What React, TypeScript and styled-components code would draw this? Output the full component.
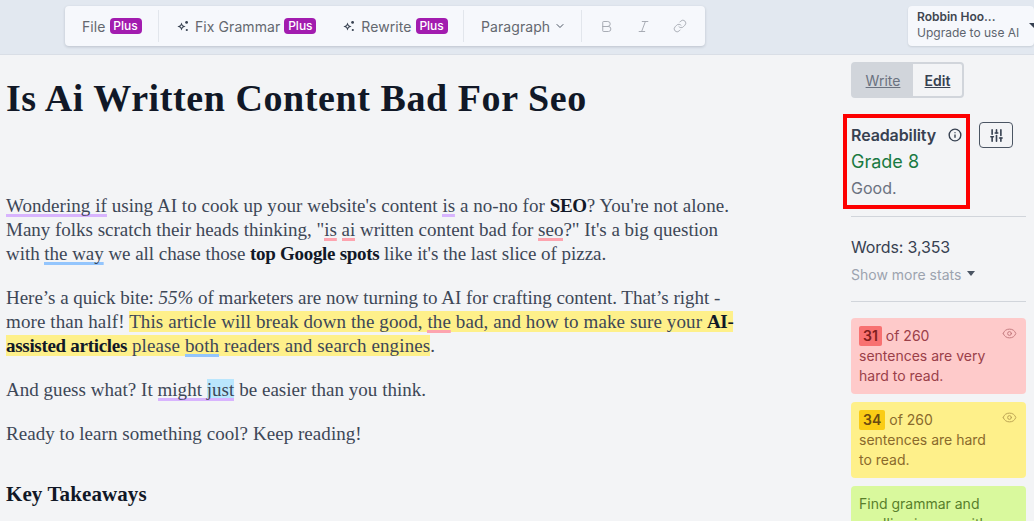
import { ChevronDown, Bold, Italic, Link, Info, SlidersVertical, Eye } from "lucide-react";
import { styled, createGlobalStyle } from "styled-components";

const GlobalStyle = createGlobalStyle`
    html, body {
        margin: 0;
        height: 100%;
        overflow: hidden;
        background-color: #f3f4f6;
    }
    #root {
        height: 100%;
    }
`;

const Page = styled.div`
    position: relative;
    width: 1034px;
    height: 521px;
    overflow: hidden;
    font-family: Inter, "Liberation Sans", sans-serif;
    background-color: #f3f4f6;
`;

const Header = styled.header`
    display: flex;
    justify-content: space-between;
    height: 55px;
    padding: 6px 0 0 65px;
    box-sizing: border-box;
    background-color: #e2e8f0;
    border-bottom: 1px solid #d9dee6;
`;

const Toolbar = styled.div`
    display: flex;
    align-items: center;
    width: 640px;
    height: 40px;
    padding: 4px 0;
    box-sizing: border-box;
    background-color: #f6f8fc;
    border-radius: 4px;
    box-shadow: 0 1px 3px rgba(15, 23, 42, 0.18);
`;

const ToolGroup = styled.div<{ $width: number; $pad?: number; $last?: boolean }>`
    display: flex;
    align-items: center;
    gap: 27px;
    width: ${(p) => p.$width}px;
    height: 32px;
    padding-left: ${(p) => p.$pad ?? 17}px;
    box-sizing: border-box;
    border-right: ${(p) => (p.$last ? "none" : "1px solid #e2e6ec")};
`;

const ToolButton = styled.div`
    display: flex;
    align-items: center;
    gap: 4px;
    font-size: 14px;
    letter-spacing: 0.08px;
    color: #64686f;
    white-space: nowrap;
`;

const SparkleIcon = styled.svg`
    margin-right: 2px;
    color: #374151;
`;

const PlusBadge = styled.span`
    display: inline-block;
    width: 32px;
    height: 16px;
    font-size: 12px;
    font-weight: 500;
    line-height: 16px;
    letter-spacing: 0;
    text-align: center;
    color: #fff;
    background-color: #a21caf;
    border-radius: 4px;
`;

const ParagraphCaret = styled(ChevronDown)`
    color: #4b5563;
`;

const FormatIcons = styled.div`
    display: flex;
    align-items: center;
    gap: 22px;
    color: #a3a8b0;
`;

const UserCard = styled.div`
    position: relative;
    width: 126px;
    height: 40px;
    padding: 3px 0 0 9px;
    box-sizing: border-box;
    background-color: #f6f8fc;
    border-radius: 4px;
    box-shadow: 0 1px 2px rgba(15, 23, 42, 0.12);
`;

const UserName = styled.div`
    font-size: 12px;
    font-weight: 600;
    line-height: 16px;
    color: #3f4650;
`;

const UserPlan = styled.div`
    font-size: 12px;
    line-height: 16px;
    color: #5d646e;
`;

const Caret = styled.span`
    position: absolute;
    top: 17px;
    left: 121px;
    border-left: 5px solid transparent;
    border-right: 5px solid transparent;
    border-top: 5px solid #374151;
`;

const Body = styled.div`
    display: flex;
`;

const Article = styled.main`
    width: 851px;
    padding: 21px 0 0 6px;
    box-sizing: border-box;
    font-family: "Liberation Serif", serif;
    color: #3d4757;
`;

const Title = styled.h1`
    margin: 0 0 73px;
    height: 45px;
    font-size: 38px;
    font-weight: 700;
    line-height: 45px;
    letter-spacing: 0.58px;
    color: #111827;
    white-space: nowrap;
`;

const Para = styled.div`
    margin: 0 0 20px;
    font-size: 19px;
    line-height: 24px;
    white-space: nowrap;
`;

// the reference uses a wider serif, so each line gets its own tracking to end at the same x
const Line = styled.div<{ $track?: number }>`
    letter-spacing: ${(p) => p.$track ?? 0.03}px;
`;

const Strong = styled.strong`
    letter-spacing: -0.3px;
    color: #111827;
`;

const Hl = styled.span`
    background-color: #fef08a;
`;

const flagColors = { purple: "#d8b4fe", red: "#fda4af", blue: "#93c5fd" };

const Flag = styled.span<{ $tone: "purple" | "red" | "blue"; $selected?: boolean }>`
    padding-bottom: 1px;
    background: linear-gradient(${(p) => flagColors[p.$tone]}, ${(p) => flagColors[p.$tone]}) bottom / 100% 3px no-repeat;
    background-color: ${(p) => (p.$selected ? "#bae6fd" : "transparent")};
`;

const SubHeading = styled.h2`
    margin: 34px 0 0;
    font-size: 21px;
    font-weight: 700;
    line-height: 28px;
    letter-spacing: 0.1px;
    color: #111827;
    white-space: nowrap;
`;

const Sidebar = styled.aside`
    display: flex;
    flex-direction: column;
    width: 175px;
    padding-top: 7px;
`;

const ModeSwitch = styled.div`
    display: flex;
    width: 113px;
    height: 36px;
    padding: 2px;
    box-sizing: border-box;
    background-color: #d1d5db;
    border-radius: 4px;
`;

const ModeItem = styled.div<{ $active?: boolean }>`
    display: flex;
    align-items: center;
    justify-content: center;
    width: ${(p) => (p.$active ? 49 : 60)}px;
    font-size: 14px;
    font-weight: ${(p) => (p.$active ? 600 : 400)};
    color: ${(p) => (p.$active ? "#374151" : "#6b7280")};
    text-decoration: underline;
    background-color: ${(p) => (p.$active ? "#f3f4f6" : "transparent")};
    border-radius: 0 2px 2px 0;
`;

const ReadRow = styled.div`
    display: flex;
    align-items: flex-start;
    margin-top: 24px;
`;

const ReadInfo = styled.div`
    width: 128px;
`;

const ReadTitle = styled.div`
    display: flex;
    align-items: center;
    justify-content: space-between;
    width: 111px;
    font-size: 16px;
    font-weight: 600;
    line-height: 26px;
    letter-spacing: -0.1px;
    color: #374151;
`;

const Grade = styled.div`
    padding-top: 1px;
    font-size: 18px;
    line-height: 26px;
    color: #1a7a42;
`;

const Verdict = styled.div`
    font-size: 16px;
    line-height: 27px;
    color: #6b7280;
`;

const SettingsButton = styled.div`
    display: flex;
    align-items: center;
    justify-content: center;
    width: 34px;
    height: 26px;
    box-sizing: border-box;
    color: #374151;
    border: 1px solid #4b5563;
    border-radius: 4px;
`;

const ReadDivider = styled.div`
    height: 1px;
    margin-top: 14px;
    background-color: #d1d5db;
`;

const Words = styled.div`
    margin-top: 18px;
    font-size: 16px;
    line-height: 24px;
    letter-spacing: -0.15px;
    color: #374151;
`;

const MoreStats = styled.div`
    display: flex;
    align-items: center;
    gap: 6px;
    margin: 6px 0 16px;
    font-size: 14px;
    line-height: 20px;
    color: #9ca3af;
`;

const MoreCaret = styled.span`
    margin-bottom: 3px;
    border-left: 4px solid transparent;
    border-right: 4px solid transparent;
    border-top: 5px solid #4b5563;
`;

const StatsDivider = styled.div`
    height: 1px;
    background-color: #d1d5db;
`;

const Cards = styled.div`
    display: flex;
    flex-direction: column;
    gap: 8px;
    margin-top: 16px;
`;

const Card = styled.div<{ $bg: string; $fg: string }>`
    position: relative;
    height: 76px;
    padding: 8px;
    box-sizing: border-box;
    font-size: 14px;
    line-height: 20px;
    color: ${(p) => p.$fg};
    background-color: ${(p) => p.$bg};
    border-radius: 4px;
`;

const Count = styled.span<{ $bg: string; $fg: string }>`
    display: inline-block;
    margin-right: 4px;
    padding: 0 4px;
    font-weight: 600;
    color: ${(p) => p.$fg};
    background-color: ${(p) => p.$bg};
    border-radius: 2px;
`;

const CardEye = styled.span`
    position: absolute;
    top: 8px;
    right: 9px;
    display: flex;
    opacity: 0.6;
`;

// the red box drawn on top of the screenshot
const Annotation = styled.div`
    position: absolute;
    top: 114px;
    left: 843px;
    width: 127px;
    height: 95px;
    box-sizing: border-box;
    border: 4px solid #fd0000;
`;

function Sparkle() {
    return (
        <SparkleIcon width="12" height="12" viewBox="0 0 12 12" fill="currentColor">
            <path d="M4.5 2.4 5.7 5.3 8.6 6.5 5.7 7.7 4.5 10.6 3.3 7.7.4 6.5 3.3 5.3Z M4.5 5 4 6 3 6.5 4 7 4.5 8 5 7 6 6.5 5 6Z" fillRule="evenodd" />
            <circle cx="9.6" cy="2.4" r="1.4" />
            <circle cx="9.8" cy="10" r="1.1" />
        </SparkleIcon>
    );
}

export default function App() {
    return (
        <Page>
            <GlobalStyle />
            <Header>
                <Toolbar>
                    <ToolGroup $width={94}>
                        <ToolButton>File <PlusBadge>Plus</PlusBadge></ToolButton>
                    </ToolGroup>
                    <ToolGroup $width={305} $pad={18}>
                        <ToolButton><Sparkle />Fix Grammar <PlusBadge>Plus</PlusBadge></ToolButton>
                        <ToolButton><Sparkle />Rewrite <PlusBadge>Plus</PlusBadge></ToolButton>
                    </ToolGroup>
                    <ToolGroup $width={118}>
                        <ToolButton>Paragraph <ParagraphCaret size={12} strokeWidth={2} /></ToolButton>
                    </ToolGroup>
                    <ToolGroup $width={123} $last>
                        <FormatIcons>
                            <Bold size={15} strokeWidth={1.5} />
                            <Italic size={15} strokeWidth={1.5} />
                            <Link size={14} strokeWidth={1.5} />
                        </FormatIcons>
                    </ToolGroup>
                </Toolbar>
                <UserCard>
                    <UserName>Robbin Hoo...</UserName>
                    <UserPlan>Upgrade to use AI</UserPlan>
                    <Caret />
                </UserCard>
            </Header>
            <Body>
                <Article>
                    <Title>Is Ai Written Content Bad For Seo</Title>
                    <Para>
                        <Line $track={0.05}><Flag $tone="purple">Wondering if</Flag> using AI to cook up your website's content <Flag $tone="purple">is</Flag> a no-no for <Strong>SEO</Strong>? You're not alone.</Line>
                        <Line $track={-0.01}>Many folks scratch their heads thinking, "<Flag $tone="red">is</Flag> <Flag $tone="red">ai</Flag> written content bad for <Flag $tone="red">seo</Flag>?" It's a big question</Line>
                        <Line $track={-0.04}>with <Flag $tone="blue">the way</Flag> we all chase those <Strong>top Google spots</Strong> like it's the last slice of pizza.</Line>
                    </Para>
                    <Para>
                        <Line $track={-0.02}>Here’s a quick bite: <em>55%</em> of marketers are now turning to AI for crafting content. That’s right -</Line>
                        <Line $track={0.1}>more than half! <Hl>This article will break down the good, <Flag $tone="red">the</Flag> bad, and how to make sure your <Strong>AI-</Strong></Hl></Line>
                        <Line $track={0.12}><Hl><Strong>assisted articles</Strong> please <Flag $tone="blue">both</Flag> readers and search engines</Hl>.</Line>
                    </Para>
                    <Para>
                        <Line>And guess what? It <Flag $tone="purple">might </Flag><Flag $tone="purple" $selected>just</Flag> be easier than you think.</Line>
                    </Para>
                    <Para>
                        <Line $track={0.05}>Ready to learn something cool? Keep reading!</Line>
                    </Para>
                    <SubHeading>Key Takeaways</SubHeading>
                </Article>
                <Sidebar>
                    <ModeSwitch>
                        <ModeItem>Write</ModeItem>
                        <ModeItem $active>Edit</ModeItem>
                    </ModeSwitch>
                    <ReadRow>
                        <ReadInfo>
                            <ReadTitle>Readability <Info size={14} strokeWidth={2.4} /></ReadTitle>
                            <Grade>Grade 8</Grade>
                            <Verdict>Good.</Verdict>
                        </ReadInfo>
                        <SettingsButton><SlidersVertical size={15} strokeWidth={2.6} /></SettingsButton>
                    </ReadRow>
                    <ReadDivider />
                    <Words>Words: 3,353</Words>
                    <MoreStats>Show more stats <MoreCaret /></MoreStats>
                    <StatsDivider />
                    <Cards>
                        <Card $bg="#fecaca" $fg="#9a4049">
                            <Count $bg="#f87171" $fg="#7f1d1d">31</Count>of 260<br />sentences are very<br />hard to read.
                            <CardEye><Eye size={15} strokeWidth={1.5} /></CardEye>
                        </Card>
                        <Card $bg="#fef08a" $fg="#8a6a2c">
                            <Count $bg="#facc15" $fg="#6b4a10">34</Count>of 260<br />sentences are hard<br />to read.
                            <CardEye><Eye size={15} strokeWidth={1.5} /></CardEye>
                        </Card>
                        <Card $bg="#d9f99d" $fg="#587f2b">
                            Find grammar and<br />spelling issues with
                        </Card>
                    </Cards>
                </Sidebar>
            </Body>
            <Annotation />
        </Page>
    );
}
